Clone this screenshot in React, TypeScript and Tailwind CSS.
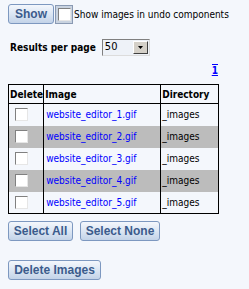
import React from "react";

const rows = [1, 2, 3, 4, 5];

function Btn({ children, className = "" }: { children: React.ReactNode; className?: string }) {
  return (
    <button
      className={`flex h-[20px] items-center justify-center whitespace-nowrap rounded-[3px] border border-[#7d98c0] bg-gradient-to-b from-[#f4f7fc] via-[#dce6f3] to-[#c3d3e8] px-[4px] text-[12px] font-bold leading-none text-[#3b5b8c] ${className}`}
      style={{ fontFamily: "'Liberation Sans', Arial, sans-serif" }}
    >
      {children}
    </button>
  );
}

function Box() {
  return <span className="block h-[13px] w-[13px] border border-t-[#808080] border-l-[#808080] border-b-[#e6e6e6] border-r-[#e6e6e6] bg-white" />;
}

export default function App() {
  return (
    <div
      className="h-[289px] w-[249px] bg-[#f4f7fc] pl-[8px] pt-[4px] text-[10px] text-black"
      style={{ fontFamily: "'DejaVu Sans Condensed', 'DejaVu Sans', sans-serif" }}
    >
      <div className="flex items-center">
        <Btn className="h-[19px] w-[46px]">Show</Btn>
        <span className="ml-[1px] flex h-[19px] w-[18px] items-center justify-center border border-[#8a9ab3] bg-[#c9d3e0]">
          <Box />
        </span>
        <span className="ml-[1px]">Show images in undo components</span>
      </div>

      <div className="mt-[15px] flex items-center">
        <span className="ml-[2px] font-bold">Results per page</span>
        <div className="ml-[6px] flex h-[17px] w-[48px] items-center border border-t-[#808080] border-l-[#808080] border-b-[#dcdcdc] border-r-[#dcdcdc] bg-[#eef2f8]">
          <span className="flex-1 pl-[2px] text-[11px]">50</span>
          <span className="mr-[1px] flex h-[13px] w-[15px] items-center justify-center border border-t-white border-l-white border-b-[#404040] border-r-[#404040] bg-[#d4d0c8]">
            <svg width="5" height="3" viewBox="0 0 5 3">
              <path d="M0 0h5L2.5 3z" fill="#000" />
            </svg>
          </span>
        </div>
      </div>

      <div className="mt-[8px] flex w-[210px] justify-end">
        <a className="border-t border-[#0000ff] font-bold leading-[11px] text-[#0000ff] underline">1</a>
      </div>

      <table className="mt-[8px] w-[211px] border-collapse border border-black">
        <thead>
          <tr className="h-[19px]">
            <th className="w-[34px] border border-black pl-[1px] text-left font-bold">Delete</th>
            <th className="w-[117px] border border-black pl-[1px] text-left font-bold">Image</th>
            <th className="border border-black pl-[1px] text-left font-bold">Directory</th>
          </tr>
        </thead>
        <tbody>
          {rows.map((n) => (
            <tr key={n} className={`h-[22px] ${n % 2 === 0 ? "bg-[#bcbcbc]" : ""}`}>
              <td className="border-r border-black pl-[6px]">
                <Box />
              </td>
              <td className="border-r border-black pl-[2px]">
                <a className="text-[#0000ff]">website_editor_{n}.gif</a>
              </td>
              <td className="pl-[1px]">_images</td>
            </tr>
          ))}
        </tbody>
      </table>

      <div className="mt-[7px] flex gap-[7px]">
        <Btn className="w-[65px]">Select All</Btn>
        <Btn className="w-[80px]">Select None</Btn>
      </div>

      <div className="mt-[19px] flex">
        <Btn className="w-[93px]">Delete Images</Btn>
      </div>
    </div>
  );
}
